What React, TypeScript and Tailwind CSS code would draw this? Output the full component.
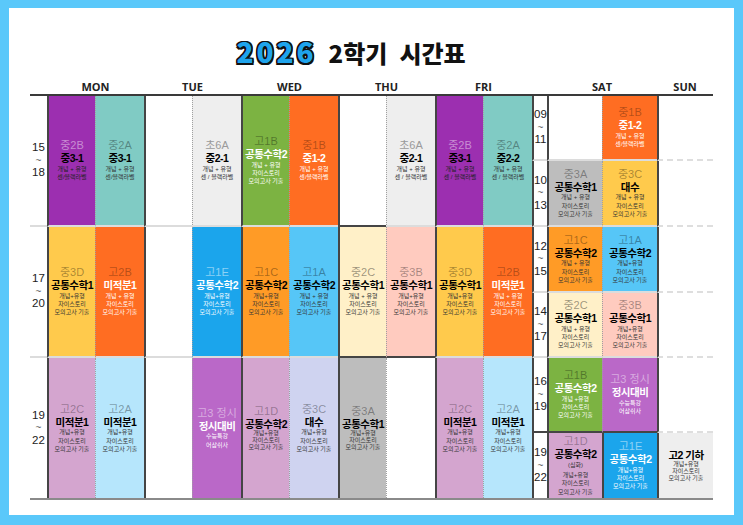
import React from 'react';

type Tone = { bg: string; label: string; main: string; sub: string };

const T: Record<string, Tone> = {
  purple: { bg: 'bg-[#9c2fb0]', label: 'text-white/45', main: 'text-black', sub: 'text-[#222]' },
  teal: { bg: 'bg-[#80cbc4]', label: 'text-black/35', main: 'text-black', sub: 'text-[#333]' },
  lgray: { bg: 'bg-[#eeeeee]', label: 'text-[#9a9a9a]', main: 'text-black', sub: 'text-[#333]' },
  green: { bg: 'bg-[#7cb342]', label: 'text-black/35', main: 'text-white', sub: 'text-white' },
  orange: { bg: 'bg-[#ff6d22]', label: 'text-black/30', main: 'text-white', sub: 'text-white' },
  yellow: { bg: 'bg-[#ffca4c]', label: 'text-black/35', main: 'text-black', sub: 'text-[#333]' },
  blue: { bg: 'bg-[#1ba5ec]', label: 'text-white/50', main: 'text-white', sub: 'text-white' },
  amber: { bg: 'bg-[#ff9b26]', label: 'text-black/35', main: 'text-black', sub: 'text-[#333]' },
  sky: { bg: 'bg-[#56c6f7]', label: 'text-black/35', main: 'text-black', sub: 'text-[#333]' },
  cream: { bg: 'bg-[#fff0c8]', label: 'text-black/40', main: 'text-black', sub: 'text-[#333]' },
  pink: { bg: 'bg-[#ffcbbf]', label: 'text-black/35', main: 'text-black', sub: 'text-[#333]' },
  mauve: { bg: 'bg-[#d4a5cf]', label: 'text-black/30', main: 'text-black', sub: 'text-[#333]' },
  pale: { bg: 'bg-[#b6e6fc]', label: 'text-black/35', main: 'text-black', sub: 'text-[#333]' },
  violet: { bg: 'bg-[#ba68c8]', label: 'text-white/45', main: 'text-white', sub: 'text-white' },
  lav: { bg: 'bg-[#cfd3f0]', label: 'text-black/35', main: 'text-black', sub: 'text-[#333]' },
  gray: { bg: 'bg-[#bdbdbd]', label: 'text-black/35', main: 'text-black', sub: 'text-[#333]' },
};

type Slot = { t: string; label?: string; subject: string; lines: string[]; tight?: boolean } | null;

const c = (t: string, label: string | undefined, subject: string, lines: string[], tight = false): Slot => ({
  t,
  label,
  subject,
  lines,
  tight,
});

const BASIC = ['개념 + 유형', '센/블랙라벨'];
const BASIC_SP = ['개념 + 유형', '센 / 블랙라벨'];
const XI = ['개념 + 유형', '자이스토리', '모의고사 기출'];
const XI_N = ['개념+유형', '자이스토리', '모의고사 기출'];
const JS = ['수능특강', '어삼쉬사'];

// MON..FRI, [row][sub]
const WEEK: Slot[][][] = [
  [
    [c('purple', '중2B', '중3-1', BASIC), c('teal', '중2A', '중3-1', BASIC)],
    [c('yellow', '중3D', '공통수학1', XI_N), c('orange', '고2B', '미적분1', XI)],
    [c('mauve', '고2C', '미적분1', XI_N), c('pale', '고2A', '미적분1', XI_N)],
  ],
  [
    [null, c('lgray', '초6A', '중2-1', BASIC_SP)],
    [null, c('blue', '고1E', '공통수학2', XI_N)],
    [null, c('violet', '고3 정시', '정시대비', JS)],
  ],
  [
    [c('green', '고1B', '공통수학2', XI), c('orange', '중1B', '중1-2', BASIC)],
    [c('amber', '고1C', '공통수학2', XI_N), c('sky', '고1A', '공통수학2', XI)],
    [c('mauve', '고1D', '공통수학2', XI_N, true), c('lav', '중3C', '대수', XI_N)],
  ],
  [
    [null, c('lgray', '초6A', '중2-1', BASIC_SP)],
    [c('cream', '중2C', '공통수학1', XI), c('pink', '중3B', '공통수학1', XI_N)],
    [c('gray', '중3A', '공통수학1', XI_N, true), null],
  ],
  [
    [c('purple', '중2B', '중3-1', BASIC_SP), c('teal', '중2A', '중2-2', BASIC_SP)],
    [c('yellow', '중3D', '공통수학1', XI_N), c('orange', '고2B', '미적분1', XI)],
    [c('mauve', '고2C', '미적분1', XI_N), c('pale', '고2A', '미적분1', XI_N)],
  ],
];

const SAT: Slot[][] = [
  [null, c('orange', '중1B', '중1-2', BASIC)],
  [c('gray', '중3A', '공통수학1', XI), c('yellow', '중3C', '대수', XI)],
  [c('amber', '고1C', '공통수학2', XI), c('sky', '고1A', '공통수학2', XI_N)],
  [c('cream', '중2C', '공통수학1', XI), c('pink', '중3B', '공통수학1', XI_N)],
  [c('green', '고1B', '공통수학2', ['개념 +유형', '자이스토리', '모의고사 기출']), c('violet', '고3 정시', '정시대비', JS)],
  [c('mauve', '고1D', '공통수학2', ['(심화)', '개념+유형', '자이스토리', '모의고사 기출']), c('blue', '고1E', '공통수학2', XI_N)],
];

const SUN: Slot = c('lgray', undefined, '고2 기하', XI_N, true);

const LEFT_TIMES = [
  ['15', '18'],
  ['17', '20'],
  ['19', '22'],
];
const RIGHT_TIMES = [
  ['09', '11'],
  ['10', '13'],
  ['12', '15'],
  ['14', '17'],
  ['16', '19'],
  ['19', '22'],
];
const LEFT_H = ['h-[131px]', 'h-[131px]', 'h-[140px]'];
const RIGHT_H = ['h-[65px]', 'h-[66px]', 'h-[66px]', 'h-[65px]', 'h-[75px]', 'h-[65px]'];

function Block({ s }: { s: NonNullable<Slot> }) {
  const tone = T[s.t];
  return (
    <div className="flex flex-col items-center text-center whitespace-nowrap">
      {s.label && <div className={`text-[11px] leading-[13px] ${tone.label}`}>{s.label}</div>}
      <div className={`text-[10.5px] font-bold tracking-[-0.5px] ${s.tight ? 'leading-[12.1px]' : 'leading-[12.5px]'} ${tone.main}`}>
        {s.subject}
      </div>
      <div className={`flex flex-col items-center text-[6px] ${s.tight ? 'leading-[7px]' : 'leading-[8.3px]'} ${tone.sub}`}>
        {s.lines.map((l) => (
          <span key={l} className={l === '(심화)' ? 'mb-[2px]' : ''}>
            {l}
          </span>
        ))}
      </div>
    </div>
  );
}

function Time({ a, b }: { a: string; b: string }) {
  return (
    <div className="flex flex-col items-center font-['Liberation_Sans',sans-serif] text-[11.5px] leading-[13.3px] text-[#222]">
      <span>{a}</span>
      <span className="text-[10px] leading-[11.5px] text-[#666]">~</span>
      <span>{b}</span>
    </div>
  );
}

function Cell({
  s,
  width,
  solidLeft,
  bottom,
}: {
  s: Slot;
  width: string;
  solidLeft: boolean;
  bottom: 'none' | 'light' | 'dark' | 'dashed';
}) {
  const left = solidLeft ? 'border-l-2 border-l-[#454545]' : 'border-l [border-left-style:dotted] border-l-[#a0a0a0]';
  const btm =
    bottom === 'light'
      ? 'border-b-2 border-b-[#dcdcdc]'
      : bottom === 'dark'
        ? 'border-b-2 border-b-[#454545]'
        : bottom === 'dashed'
          ? 'border-b-2 [border-bottom-style:dashed] border-b-[#dedede]'
          : '';
  return (
    <div className={`${width} ${left} ${btm} ${s ? T[s.t].bg : 'bg-white'} flex items-center justify-center`}>
      {s && <Block s={s} />}
    </div>
  );
}

export default function App() {
  return (
    <div className="w-[743px] h-[525px] bg-[#5ac8fa] pt-[8px] pb-[10px] pl-[9px] pr-[9px] font-['Liberation_Sans','Noto_Sans_CJK_KR',sans-serif]">
      <div className="h-full bg-white px-[21px]">
        {/* Title */}
        <div className="h-[72px] pt-[16px] pr-[41px] flex items-center justify-center font-['Noto_Sans_CJK_KR',sans-serif]">
          <div className="flex items-baseline">
            <span className="text-[28px] leading-[32px] font-black tracking-[3px] text-[#1fa4ec] [text-shadow:-1.5px_-1.5px_0_#111,1.5px_-1.5px_0_#111,-1.5px_1.5px_0_#111,1.5px_1.5px_0_#111,0_-1.5px_0_#111,0_1.5px_0_#111,-1.5px_0_0_#111,1.5px_0_0_#111]">
              2026
            </span>
            <span className="ml-[12px] text-[24px] leading-[32px] font-black text-[#111]">2학기</span>
            <span className="ml-[12px] text-[24px] leading-[32px] font-black text-[#111]">시간표</span>
          </div>
        </div>

        {/* Day headers */}
        <div className="flex h-[14px] items-center font-['Open_Sans',sans-serif] text-[11px] font-bold text-[#222]">
          <div className="w-[17px]" />
          {['MON', 'TUE', 'WED', 'THU', 'FRI'].map((d) => (
            <div key={d} className="w-[97px] text-center">
              {d}
            </div>
          ))}
          <div className="w-[15px]" />
          <div className="w-[110px] text-center">SAT</div>
          <div className="w-[56px] text-center">SUN</div>
        </div>

        {/* Grid */}
        <div className="flex border-t-2 border-b-2 border-t-[#3a3a3a] border-b-[#8a8a8a]">
          <div className="flex flex-col">
            {LEFT_TIMES.map((tm, r) => (
              <div key={r} className={`flex ${LEFT_H[r]}`}>
                <div className={`w-[17px] flex items-center justify-center ${r < 2 ? 'border-b-2 border-b-[#dcdcdc]' : ''}`}>
                  <Time a={tm[0]} b={tm[1]} />
                </div>
                {WEEK.map((day, d) =>
                  day[r].map((s, i) => {
                    let bottom: 'none' | 'light' | 'dark' = r < 2 ? 'light' : 'none';
                    if (d === 3 && ((r === 0 && i === 0) || r === 1)) bottom = 'dark';
                    return (
                      <Cell
                        key={`${d}-${i}`}
                        s={s}
                        width={i === 0 ? 'w-[48px]' : 'w-[49px]'}
                        solidLeft={i === 0}
                        bottom={bottom}
                      />
                    );
                  }),
                )}
              </div>
            ))}
          </div>

          <div className="flex flex-col">
            {RIGHT_TIMES.map((tm, r) => {
              const last = r === RIGHT_TIMES.length - 1;
              const bottom: 'none' | 'light' | 'dark' = last ? 'none' : r === 4 ? 'dark' : 'light';
              return (
                <div key={r} className={`flex ${RIGHT_H[r]}`}>
                  <div
                    className={`w-[15px] border-l-2 border-l-[#454545] flex items-center justify-center ${
                      bottom === 'light' ? 'border-b-2 border-b-[#dcdcdc]' : bottom === 'dark' ? 'border-b-2 border-b-[#454545]' : ''
                    }`}
                  >
                    <Time a={tm[0]} b={tm[1]} />
                  </div>
                  <Cell s={SAT[r][0]} width="w-[55px]" solidLeft bottom={bottom} />
                  <Cell s={SAT[r][1]} width="w-[55px]" solidLeft={last} bottom={bottom} />
                  <Cell s={last ? SUN : null} width="w-[56px]" solidLeft bottom={last ? 'none' : 'dashed'} />
                </div>
              );
            })}
          </div>
        </div>
      </div>
    </div>
  );
}
